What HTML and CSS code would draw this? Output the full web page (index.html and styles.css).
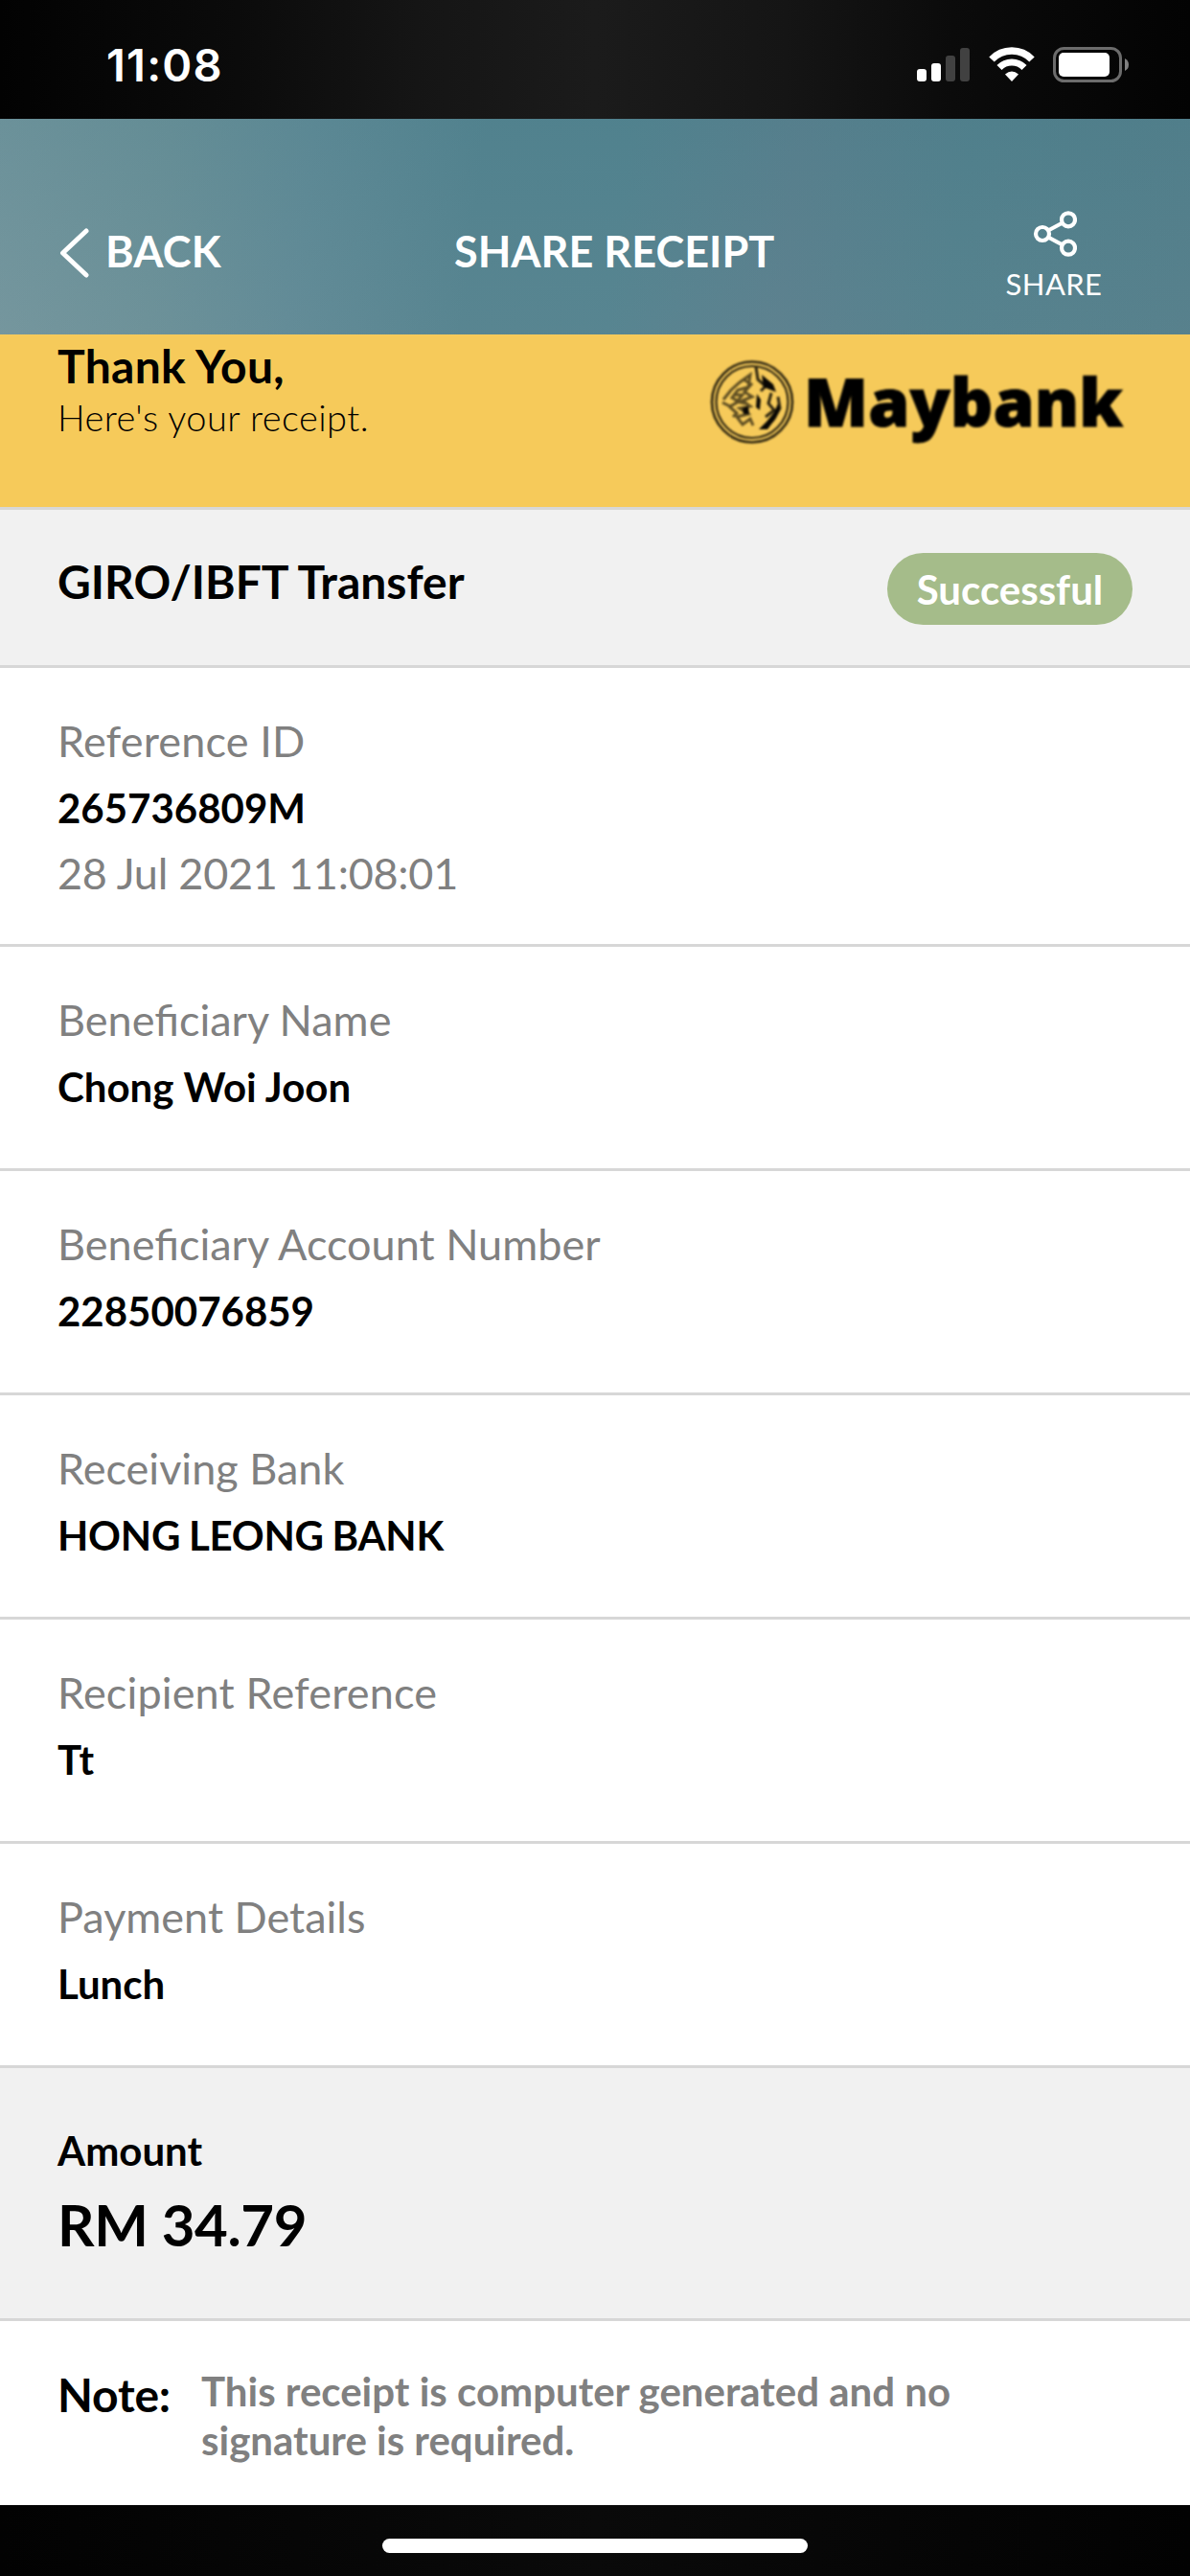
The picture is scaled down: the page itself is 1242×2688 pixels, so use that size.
FILE: index.html
```html
<!DOCTYPE html>
<html lang="en">
<head>
<meta charset="utf-8">
<title>Share Receipt</title>
<link rel="stylesheet" href="styles.css">
</head>
<body>
<div class="status">
  <span class="time">11:08</span>
  <div class="status-icons">
    <svg class="signal" width="56" height="36" viewBox="0 0 56 36">
      <rect x="0" y="22" width="10" height="13" rx="3" fill="#fff"/>
      <rect x="15" y="16" width="10" height="19" rx="3" fill="#fff"/>
      <rect x="30" y="8" width="10" height="27" rx="3" fill="#414141"/>
      <rect x="45" y="0" width="10" height="35" rx="3" fill="#414141"/>
    </svg>
    <svg class="wifi" width="48" height="36" viewBox="0 0 48 36">
      <path d="M3 13A29 29 0 0 1 45 13" fill="none" stroke="#fff" stroke-width="7.5"/>
      <path d="M11 21.500A18 18 0 0 1 37 21.500" fill="none" stroke="#fff" stroke-width="7"/>
      <path d="M24 36L17 28.500Q24 22.500 31 28.500Z" fill="#fff"/>
    </svg>
    <svg class="battery" width="80" height="38" viewBox="0 0 80 38">
      <rect x="1.500" y="1.500" width="69" height="34" rx="10" fill="none" stroke="#6c6c6c" stroke-width="3"/>
      <rect x="6" y="6" width="53" height="25" rx="5" fill="#fff"/>
      <path d="M75 12Q79 14 79 18.500T75 25Z" fill="#808080"/>
    </svg>
  </div>
</div>
<header class="nav">
  <div class="back">
    <svg width="32" height="54" viewBox="0 0 32 54"><path d="M28 4L3.500 27L28 50" fill="none" stroke="#fff" stroke-width="5" stroke-linecap="round" stroke-linejoin="round"/></svg>
    <span class="back-label">BACK</span>
  </div>
  <h1 class="title">SHARE RECEIPT</h1>
  <div class="share">
    <svg width="48" height="50" viewBox="0 0 48 50" fill="none" stroke="#fff" stroke-width="4.200">
      <circle cx="12" cy="26" r="7"/><circle cx="39" cy="11.300" r="7"/><circle cx="39" cy="40.700" r="7"/>
      <path d="M18 22.500L33 14.500M18 29.500L33 37.500"/>
    </svg>
    <span class="share-label">SHARE</span>
  </div>
</header>
<main>
  <section class="thanks">
    <div>
      <h2 class="thanks-title">Thank You,</h2>
      <p class="thanks-sub">Here's your receipt.</p>
    </div>
    <svg class="brand" width="436" height="100" viewBox="0 0 436 100">
      <g class="crest" fill="none" stroke="#2b2410">
        <circle cx="44" cy="45.500" r="42" stroke-width="2.600"/>
        <circle cx="44" cy="45.500" r="37.500" stroke-width="2.200"/>
        <path d="M14 43L22 33L31 25L42 17L40 30L29 33L23 41L30 45L21 50L13 46M35 22L43 27L36 35L44 40L34 44L42 50L31 52L40 58L28 61L34 69L42 63L45 70M26 38L34 38L28 45L37 47M20 50L28 57L24 61" stroke-width="3" opacity=".75"/>
        <path d="M48 9L50 22L58 29L53 34M64 36L61 47L67 54L58 61M71 40L73 52L66 64L56 73" stroke-width="3"/>
        <path d="M54 17L66 27L69 35L56 30Z M51 74L59 66L67 56L71 47L73 53L69 62L60 74Z M49 37L53 43L52 54L48 51Z M34 52L40 50L41 58L35 58Z" fill="#080704" stroke="none"/>
      </g>
      <text class="brand-name" x="98" y="71" textLength="333" lengthAdjust="spacingAndGlyphs">Maybank</text>
    </svg>
  </section>
  <section class="type">
    <h2 class="type-name">GIRO/IBFT Transfer</h2>
    <span class="pill">Successful</span>
  </section>
  <section class="row row-ref">
    <div class="label label-wide">Reference ID</div>
    <div class="value">265736809M</div>
    <div class="label date">28 Jul 2021 11:08:01</div>
  </section>
  <section class="row">
    <div class="label">Beneficiary Name</div>
    <div class="value">Chong Woi Joon</div>
  </section>
  <section class="row">
    <div class="label">Beneficiary Account Number</div>
    <div class="value">22850076859</div>
  </section>
  <section class="row">
    <div class="label">Receiving Bank</div>
    <div class="value value-caps">HONG LEONG BANK</div>
  </section>
  <section class="row">
    <div class="label label-wide">Recipient Reference</div>
    <div class="value">Tt</div>
  </section>
  <section class="row">
    <div class="label">Payment Details</div>
    <div class="value">Lunch</div>
  </section>
  <section class="amount">
    <div class="amount-label">Amount</div>
    <div class="amount-value">RM 34.79</div>
  </section>
  <section class="note">
    <span class="note-label">Note:</span>
    <p class="note-text">This receipt is computer generated and no<br>signature is required.</p>
  </section>
</main>
<footer class="home"><div class="home-bar"></div></footer>
</body>
</html>
```
FILE: styles.css
```css
* { box-sizing: border-box; margin: 0; padding: 0; }
body { width: 1242px; height: 2688px; background: #fff; color: #000; font-family: Lato, sans-serif; overflow: hidden; }
svg { display: block; flex: none; }
h1, h2, span, div { white-space: nowrap; }

.status { height: 124px; display: flex; justify-content: space-between; padding: 0 63px 0 111px; background: linear-gradient(90deg, #020202 0%, #0b0b0b 20%, #151515 35%, #1b1b1b 50%, #151515 66%, #0b0b0b 80%, #030303 100%); color: #fff; }
.time { font: 600 47px/58px Inter, sans-serif; letter-spacing: 1.2px; margin-top: 39px; }
.status-icons { display: flex; }
.signal { margin-top: 50px; }
.wifi { margin: 49px 0 0 19px; }
.battery { margin: 49px 0 0 19px; }

.nav { height: 225px; display: grid; grid-template-columns: 474px 1fr 192px; background: linear-gradient(180deg, rgba(75,125,138,.25), rgba(120,145,155,.15)), linear-gradient(97deg, #76989f 0%, #6c9299 14%, #608b97 26%, #53838f 40%, #52838f 52%, #597f8d 66%, #51808c 80%, #527e8a 100%); color: #fff; }
.back { display: flex; padding: 113px 0 0 62px; }
.back-label { font-weight: 700; font-size: 45px; line-height: 54px; letter-spacing: .2px; margin: -2px 0 0 16px; }
.title { font-weight: 700; font-size: 45px; line-height: 54px; margin-top: 111px; }
.share { width: 100px; margin-top: 94px; display: flex; flex-direction: column; align-items: center; }
.share-label { font-size: 31px; line-height: 38px; letter-spacing: .4px; margin-top: 9px; }

.thanks { height: 183px; display: flex; justify-content: space-between; padding: 0 65px 0 60px; background: #f6ca5a; border-bottom: 3px solid #d7d7d7; }
.thanks-title { font-size: 48px; line-height: 58px; letter-spacing: .3px; margin-top: 4px; }
.thanks-sub { font-weight: 300; font-size: 38px; line-height: 46px; letter-spacing: .42px; margin-top: 1px; }
.brand { margin-top: 25px; overflow: visible; }
.crest { filter: blur(.8px); }
.brand-name { font: 900 69px "Noto Sans", sans-serif; stroke: #000; stroke-width: 1px; filter: blur(.8px); }

.type { height: 165px; display: flex; justify-content: space-between; padding: 45px 60px 0; background: #f1f1f1; border-bottom: 3px solid #d7d7d7; }
.type-name { font-size: 48px; line-height: 58px; margin-top: 1px; }
.pill { width: 256px; height: 75px; border-radius: 38px; background: #a5bc8a; color: #fff; font-weight: 700; font-size: 42px; line-height: 76px; text-align: center; }

.row { height: 234px; padding: 49px 60px 0; border-bottom: 3px solid #d7d7d7; }
.row-ref { height: 291px; }
.label { font-size: 45px; line-height: 54px; color: #808080; }
.label-wide { letter-spacing: .15px; }
.value { font-weight: 700; font-size: 42px; line-height: 50px; margin-top: 18px; }
.value-caps { letter-spacing: -.25px; word-spacing: -1.2px; }
.date { letter-spacing: -.25px; margin-top: 16px; }

.amount { height: 264px; padding: 61px 60px 0; background: #f1f1f1; border-bottom: 3px solid #d7d7d7; }
.amount-label { font-weight: 700; font-size: 42px; line-height: 50px; }
.amount-value { font-weight: 700; font-size: 60px; line-height: 70px; letter-spacing: -.4px; margin-top: 17px; }

.note { height: 192px; display: flex; padding: 0 60px; }
.note-label { width: 150px; font-weight: 700; font-size: 48px; line-height: 58px; letter-spacing: -.2px; margin-top: 48px; }
.note-text { font-weight: 700; font-size: 42px; line-height: 51px; color: #808080; margin-top: 48px; }

.home { height: 74px; padding-top: 35px; background: linear-gradient(90deg, #020202, #0a0a0a 50%, #020202); }
.home-bar { width: 444px; height: 15px; margin: 0 auto; border-radius: 8px; background: #fff; }
```
